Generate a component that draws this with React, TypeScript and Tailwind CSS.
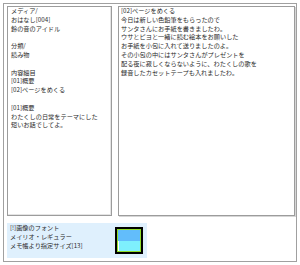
const leftLines = [
  "メディア/",
  "おはなし[004]",
  "鈴の音のアイドル",
  "",
  "分類/",
  "読み物",
  "",
  "内容細目",
  "[01]概要",
  "[02]ページをめくる",
  "",
  "[01]概要",
  "わたくしの日常をテーマにした",
  "短いお話でしてよ。",
];

const rightLines = [
  "[02]ページをめくる",
  "今日は新しい色鉛筆をもらったので",
  "サンタさんにお手紙を書きましたわ。",
  "ウサとピヨと一緒に読む絵本をお願いした",
  "お手紙を小包に入れて送りましたのよ。",
  "その小包の中にはサンタさんがプレゼントを",
  "配る夜に寂しくならないように、わたくしの歌を",
  "録音したカセットテープも入れましたわ。",
];

function Lines({ lines }: { lines: string[] }) {
  return (
    <>
      {lines.map((l, i) => (
        <div key={i} className="h-[8.8px] whitespace-nowrap">
          {l}
        </div>
      ))}
    </>
  );
}

export default function App() {
  return (
    <div
      className="w-[300px] h-[265px] bg-white p-[3px] text-[6.2px] leading-[8.8px] text-[#2a2a2a]"
      style={{ fontFamily: '"Noto Sans CJK JP", "Noto Sans", sans-serif' }}
    >
      <div className="w-[294px] h-[259px] border border-[#a0a0a0] pl-[3px] pt-[2px] flex flex-col">
        <div className="flex gap-[6px] h-[210px]">
          <div className="w-[105px] h-full border border-[#9c9c9c] shadow-[inset_-1px_-1px_0_#e4e4e4] pl-[3px]">
            <Lines lines={leftLines} />
          </div>
          <div className="w-[177px] h-full border border-[#9c9c9c] shadow-[1px_1px_0_#d6d6d6] pl-[2px]">
            <Lines lines={rightLines} />
          </div>
        </div>
        <div className="mt-[7px] w-[140px] h-[35px] bg-[#dff0fd] flex justify-between pl-[3px] pr-[4px] pt-[1px]">
          <div>
            <div>[!]画像のフォント</div>
            <div>メイリオ・レギュラー</div>
            <div>メモ帳より指定サイズ[13]</div>
          </div>
          <div className="mt-[3px] w-[28px] h-[27px] border-2 border-black">
            <div className="w-full h-full border border-[#8fdc2a] flex flex-col">
              <div className="flex-1 bg-[#62bdfb]" />
              <div className="flex-1 bg-[#7ef0fd] border-l border-white" />
            </div>
          </div>
        </div>
      </div>
    </div>
  );
}
